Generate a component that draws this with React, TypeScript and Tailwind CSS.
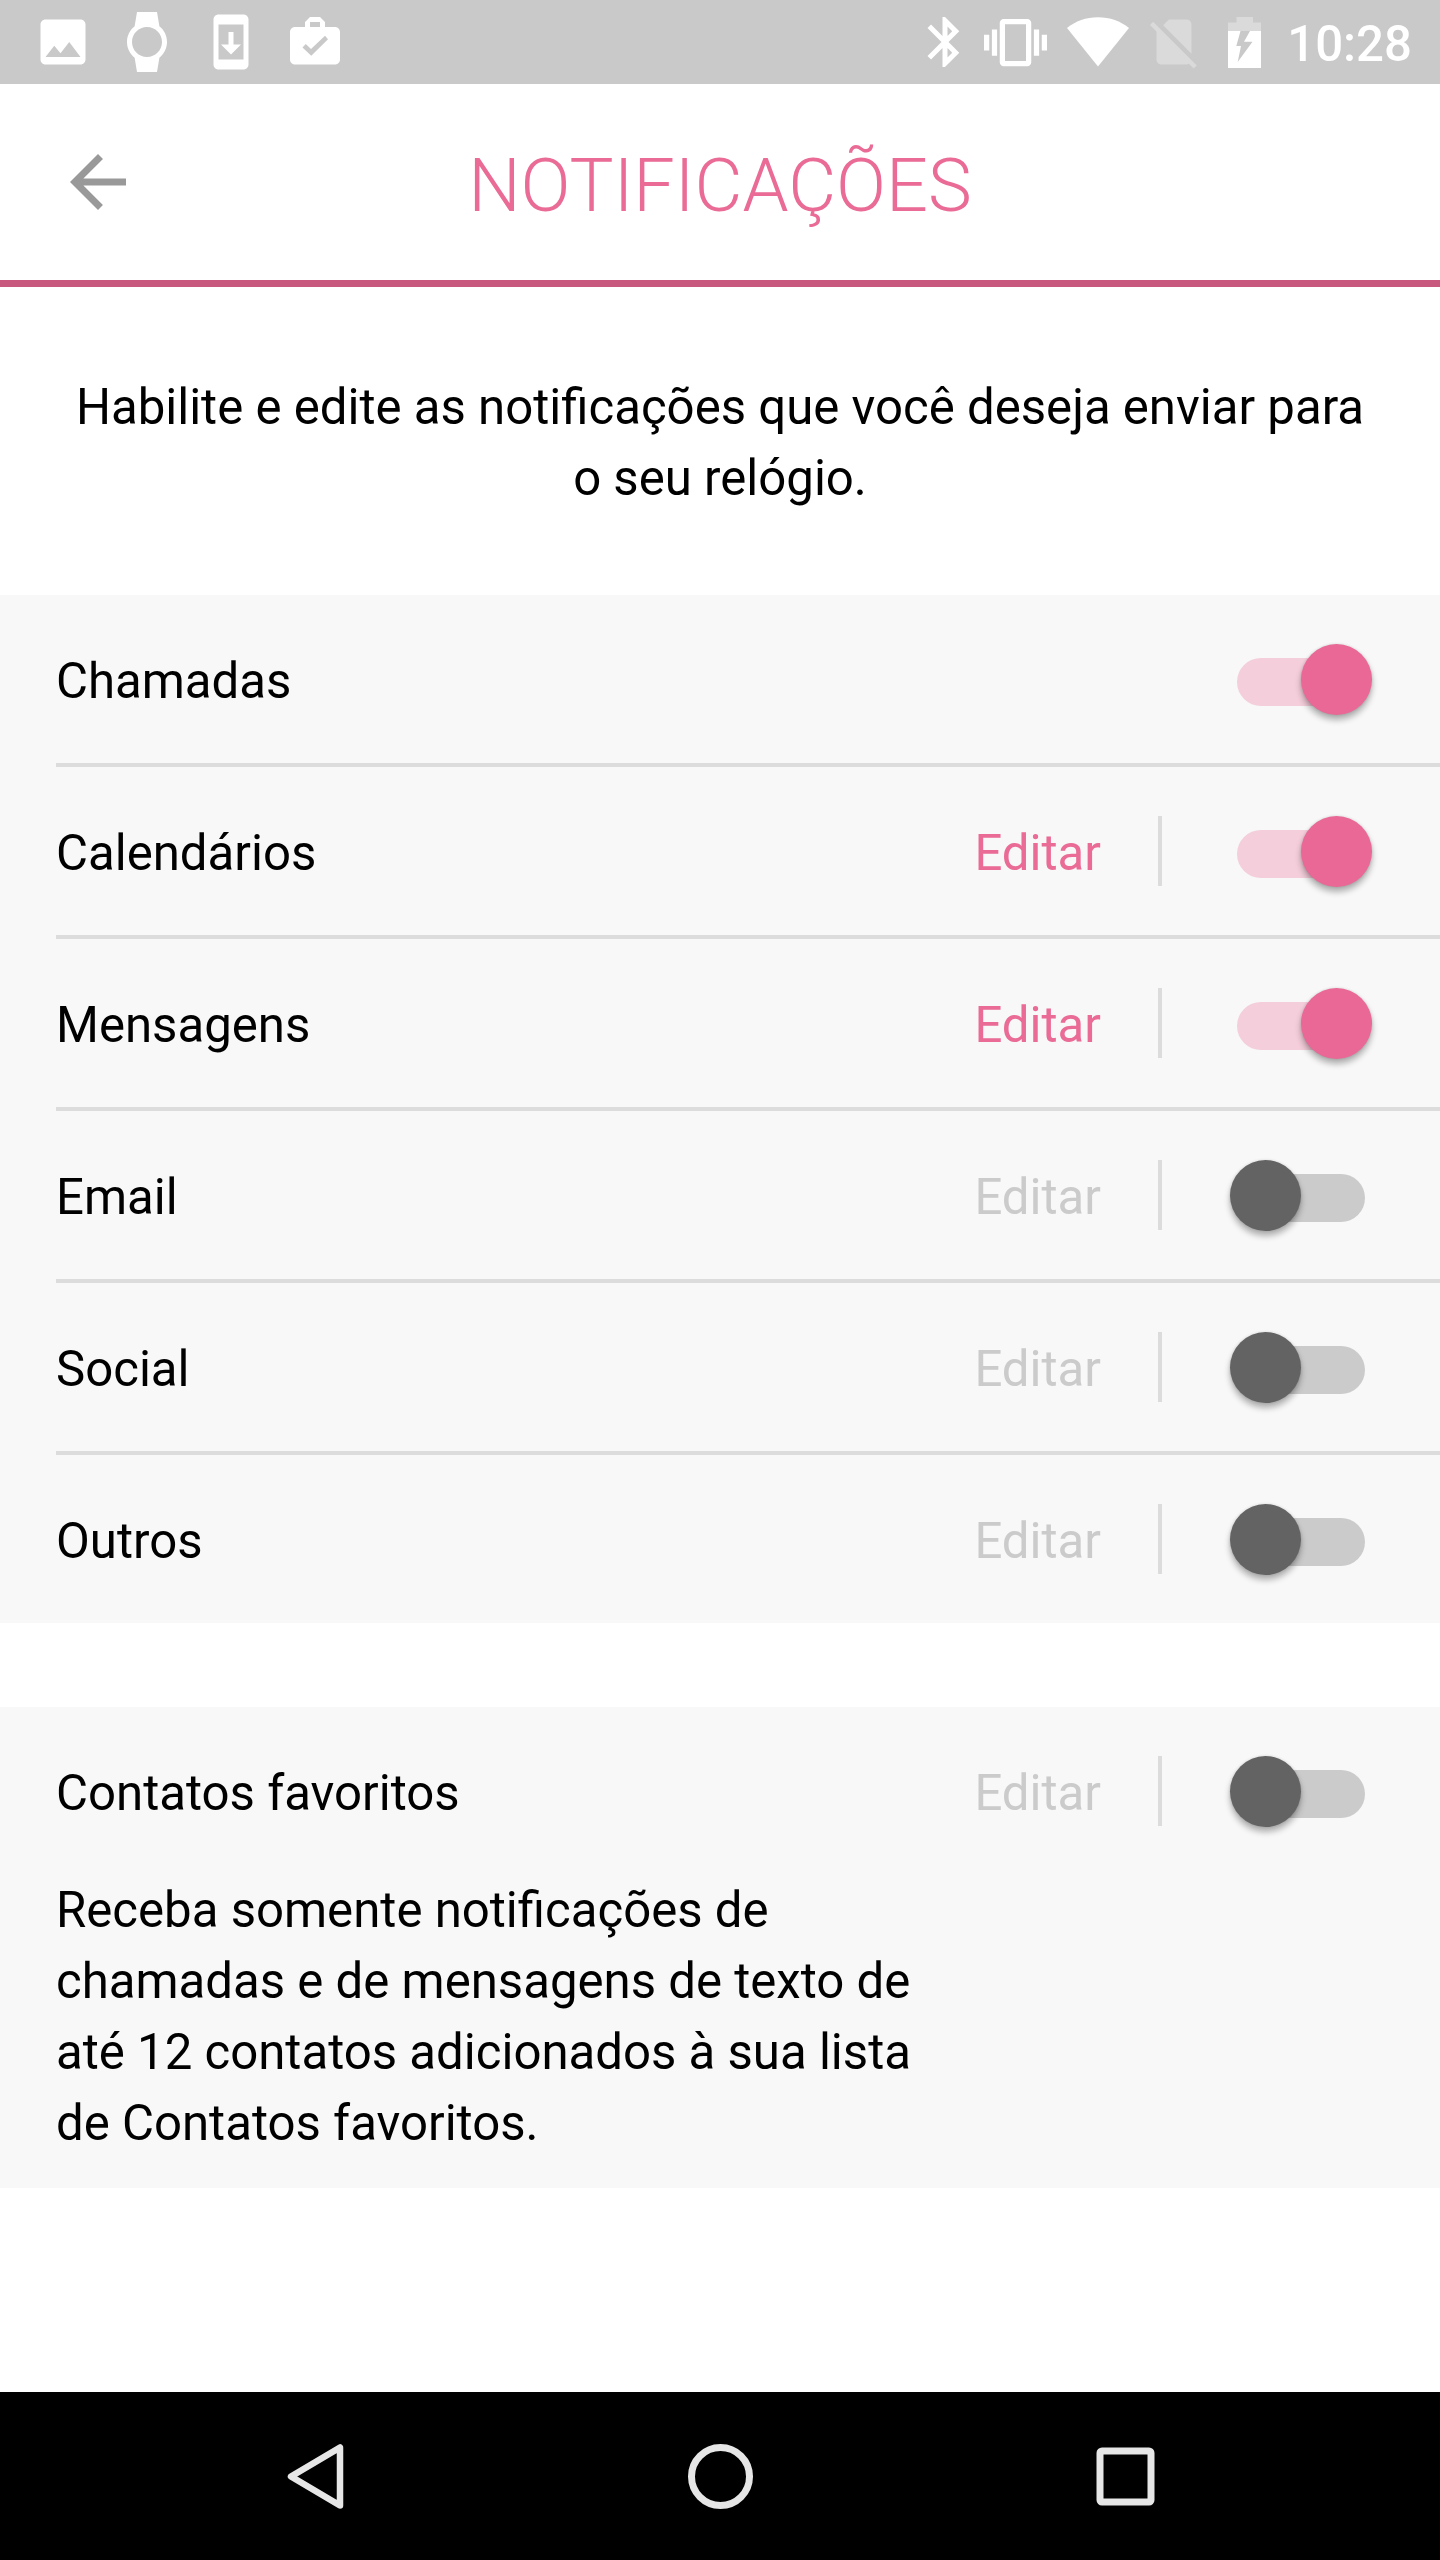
import { useState } from "react"
import clsx from "clsx"

interface NotificationItem {
  id: string
  label: string
  enabled: boolean
  editable: boolean
}

const items: NotificationItem[] = [
  { id: "calls", label: "Chamadas", enabled: true, editable: false },
  { id: "calendars", label: "Calendários", enabled: true, editable: true },
  { id: "messages", label: "Mensagens", enabled: true, editable: true },
  { id: "email", label: "Email", enabled: false, editable: true },
  { id: "social", label: "Social", enabled: false, editable: true },
  { id: "others", label: "Outros", enabled: false, editable: true },
]

function StatusIcon({ d, className }: { d: string; className?: string }) {
  return (
    <svg viewBox="0 0 24 24" fill="currentColor" fillRule="evenodd" className={clsx("shrink-0", className ?? "size-15")}>
      <path d={d} />
    </svg>
  )
}

function StatusBar() {
  return (
    <div className="flex h-[84px] shrink-0 items-center justify-between bg-[#c9c9c9] pl-[33px] pr-[28px] text-white">
      <div className="flex items-center gap-6">
        <StatusIcon d="M21 19V5c0-1.1-.9-2-2-2H5c-1.1 0-2 .9-2 2v14c0 1.1.9 2 2 2h14c1.1 0 2-.9 2-2zM8.5 13.5l2.5 3.01L14.5 12l4.5 6H5l3.5-4.5z" />
        <StatusIcon d="M20 12c0-2.54-1.19-4.81-3.04-6.27L16 0H8l-.95 5.73C5.19 7.19 4 9.45 4 12s1.19 4.81 3.05 6.27L8 24h8l.96-5.73C18.81 16.81 20 14.54 20 12zM6 12c0-3.31 2.69-6 6-6s6 2.69 6 6-2.69 6-6 6-6-2.69-6-6z" />
        <StatusIcon d="M17 1.01L7 1c-1.1 0-2 .9-2 2v18c0 1.1.9 2 2 2h10c1.1 0 2-.9 2-2V3c0-1.1-.9-1.99-2-1.99zM17 19H7V5h10v14zm-1-6h-3V8h-2v5H8l4 4 4-4z" />
        <StatusIcon d="M16 6V4l-2-2h-4L8 4v2H4c-1.1 0-2 .9-2 2v11c0 1.1.9 2 2 2h16c1.1 0 2-.9 2-2V8c0-1.1-.9-2-2-2h-4zM10 4h4v2h-4V4zM10.5 17.5L7 14.2l1.3-1.4 2.1 2L16 9.5l1.2 1.4-6.7 6.6z" />
      </div>
      <div className="flex items-center">
        <StatusIcon d="M17.71 7.71L12 2h-1v7.59L6.41 5 5 6.41 10.59 12 5 17.59 6.41 19 11 14.41V22h1l5.71-5.71-4.3-4.29 4.3-4.29zM13 5.83l1.88 1.88L13 9.59V5.83zm1.88 10.46L13 18.17v-3.76l1.88 1.88z" />
        <StatusIcon
          className="ml-[9px] size-[63px]"
          d="M0 15h2V9H0v6zm3 2h2V7H3v10zm19-8v6h2V9h-2zm-3 8h2V7h-2v10zM16.5 3h-9C6.67 3 6 3.67 6 4.5v15c0 .83.67 1.5 1.5 1.5h9c.83 0 1.5-.67 1.5-1.5v-15c0-.83-.67-1.5-1.5-1.5zM16 19H8V5h8v14z"
        />
        <svg viewBox="0 0 62 50" fill="currentColor" className="ml-5 h-[50px] w-[62px] shrink-0">
          <path d="M31 49.5L0 11C8.5 4.2 19 .3 31 .3S53.5 4.2 62 11L31 49.5z" />
        </svg>
        <StatusIcon
          className="ml-[15px] size-15 text-[#dadada]"
          d="M18.99 5c0-1.1-.89-2-1.99-2h-7L7.66 5.34 19 16.68 18.99 5zM3.65 3.88L2.38 5.15 5 7.77V19c0 1.1.9 2 2 2h10.01c.35 0 .67-.1.96-.26l1.88 1.88 1.27-1.27L3.65 3.88z"
        />
        <svg viewBox="0 0 33 51" className="ml-6 h-[51px] w-[33px] shrink-0">
          <path d="M8.5 0H25v5.5h8V14H0V5.5h8.5z" fill="#dadada" />
          <path d="M0 14h33v37H0z" fill="#fff" />
          <path d="M12.5 14H22l-6 10.7h8.5L9.7 45 13 29H8.3z" fill="#c9c9c9" />
        </svg>
        <span className="ml-[26px] pt-[5px] text-[49.2px] leading-none font-medium">10:28</span>
      </div>
    </div>
  )
}

function Header() {
  return (
    <header className="grid h-[203px] shrink-0 grid-cols-[84px_1fr_84px] items-center border-b-[7px] border-[#c8587e] px-14">
      <button aria-label="Voltar">
        <svg viewBox="0 0 24 24" fill="#999" className="size-21">
          <path d="M20 11H7.83l5.59-5.59L12 4l-8 8 8 8 1.41-1.41L7.83 13H20v-2z" />
        </svg>
      </button>
      <h1 className="pt-[7px] text-center text-[73.8px] leading-[86px] font-light text-[#e96b96]">NOTIFICAÇÕES</h1>
    </header>
  )
}

function Toggle({ checked, onChange, label }: { checked: boolean; onChange: () => void; label: string }) {
  return (
    <button
      role="switch"
      aria-checked={checked}
      aria-label={label}
      onClick={onChange}
      className="relative flex h-[71px] w-[142px] items-center px-[7px]"
    >
      <span className={clsx("mt-[5px] h-12 w-full rounded-full", checked ? "bg-[#f4cedb]" : "bg-[#cbcbcb]")} />
      <span
        className={clsx(
          "absolute top-0 size-[71px] rounded-full shadow-[0_5px_6px_rgba(0,0,0,0.3),0_0_3px_rgba(0,0,0,0.12)]",
          checked ? "right-0 bg-[#e96896]" : "left-0 bg-[#636363]",
        )}
      />
    </button>
  )
}

function NotificationRow({ item }: { item: NotificationItem }) {
  const [enabled, setEnabled] = useState(item.enabled)

  return (
    <div className="flex h-[168px] items-center pr-[68px]">
      <span className="flex-1 pt-1">{item.label}</span>
      {item.editable && (
        <>
          <button className={clsx("pt-1", enabled ? "text-[#e96b96]" : "text-[#cbcbcb]")}>Editar</button>
          <div className="mr-[68px] ml-[57px] h-[70px] w-1 bg-[#dcdcdc]" />
        </>
      )}
      <Toggle checked={enabled} onChange={() => setEnabled(!enabled)} label={item.label} />
    </div>
  )
}

function NavigationBar() {
  return (
    <nav className="flex h-[168px] shrink-0 items-center justify-center bg-black">
      <svg viewBox="0 0 1440 168" fill="none" stroke="#e6e6e6" className="h-[168px] w-[1440px]">
        <path d="M340 55.5v58l-49-29z" strokeWidth="6.5" strokeLinejoin="round" />
        <circle cx="720.5" cy="84.5" r="29" strokeWidth="7" />
        <rect x="1100" y="59" width="51" height="51" rx="2" strokeWidth="7" />
      </svg>
    </nav>
  )
}

export default function App() {
  return (
    <div className="flex h-[2560px] w-[1440px] flex-col bg-white font-[Roboto,sans-serif] text-[49.15px] leading-[71px] text-black">
      <StatusBar />
      <Header />
      <main className="flex-1">
        <p className="px-16 pt-[85px] pb-[81px] text-center">
          Habilite e edite as notificações que você deseja enviar para o seu relógio.
        </p>

        <ul className="divide-y-4 divide-[#dcdcdc] bg-[#f8f8f8] pl-14">
          {items.map((item) => (
            <li key={item.id}>
              <NotificationRow item={item} />
            </li>
          ))}
        </ul>

        {/* Favoritos */}
        <section className="mt-21 bg-[#f8f8f8] pb-[29px] pl-14">
          <NotificationRow item={{ id: "favorites", label: "Contatos favoritos", enabled: false, editable: true }} />
          <p className="w-[870px]">
            Receba somente notificações de chamadas e de mensagens de texto de até 12 contatos adicionados à sua lista
            de Contatos favoritos.
          </p>
        </section>
      </main>
      <NavigationBar />
    </div>
  )
}
